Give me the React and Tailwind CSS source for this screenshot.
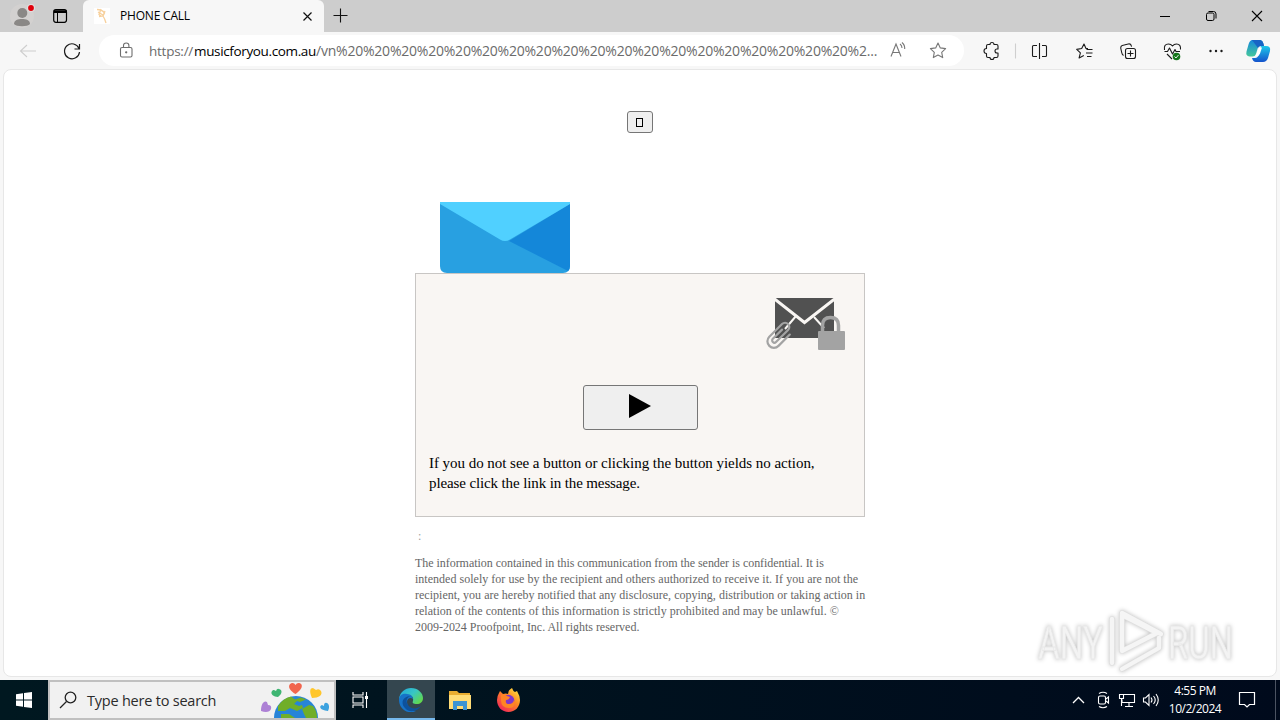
import React from "react";

const url = "/vn" + "%20".repeat(19) + "%2...";

const TitleBar = () => {
  return (
    <div className="flex h-8 bg-[#cdcdcd] text-black">
      <div className="flex items-center w-[83px] rounded-br-md">
        <svg className="w-[83px] h-8" viewBox="0 0 83 32" fill="none">
          <circle cx="22" cy="16" r="12" fill="#d3d1d0" />
          <circle cx="22.3" cy="13" r="5" fill="#8a8886" />
          <path d="M14 24c0-4 4-5 8-5s8 1 8 5c-2 3-14 3-16 0z" fill="#8a8886" />
          <circle cx="31" cy="8" r="4" fill="#e2dedd" />
          <circle cx="31" cy="8" r="2.9" fill="#e0000b" />
          <rect x="53.7" y="9.7" width="12.8" height="12.6" rx="2.2" stroke="#000" strokeWidth="1.2" />
          <path d="M54 11h12.500M54 12.300h12.500" stroke="#000" strokeWidth="1.5" />
          <path d="M57.500 13v9" stroke="#000" strokeWidth="1" />
        </svg>
      </div>
      <div className="flex items-center w-[241px] rounded-t-md bg-[#f7f7f7] pl-[11px]">
        <svg className="w-4 h-4" viewBox="0 0 16 16" fill="none">
          <rect width="16" height="16" fill="#fff" />
          <path d="M3 1.500q5 0 7.500 3.500L9 8l-4 .5M7 1L5 6.500l2.500 2M11 3L9 8q2 3 3 7M4 4l5 3" stroke="#f7d09c" strokeWidth="1.300" />
        </svg>
        <span className="ml-[10px] w-[183px] text-[12px] tracking-[-0.2px] whitespace-nowrap">PHONE CALL</span>
        <svg className="w-[9px] h-[9px]" viewBox="0 0 9 9" stroke="#111" strokeWidth="1.2">
          <path d="M.5.5l8 8M8.500.5l-8 8" />
        </svg>
      </div>
      <svg className="w-[34px] h-8" viewBox="0 0 34 32" stroke="#111" strokeWidth="1.1">
        <path d="M9.500 15.500h14M16.500 8.500v14" />
      </svg>
      <svg className="ml-auto w-[140px] h-8" viewBox="0 0 140 32" fill="none" stroke="#000" strokeWidth="1">
        <path d="M20 16.500h10" />
        <rect x="66.500" y="13" width="7.500" height="7.500" rx="1.500" />
        <path d="M68.500 11.500h5q2.500 0 2.500 2.500v4.500" />
        <path d="M112 11l10 10M122 11l-10 10" strokeWidth="1.1" />
      </svg>
    </div>
  );
};

const Toolbar = () => {
  return (
    <div className="flex items-center h-[37px] bg-[#f7f7f7]">
      <svg className="w-[99px] h-[37px]" viewBox="0 0 99 37" fill="none">
        <path d="M36 19H21M27 13l-6.500 6 6.500 6" stroke="#cecece" strokeWidth="1.1" />
        <path d="M79 16.500a7.500 7.500 0 1 0 .5 3.500M79.500 12v5h-5" stroke="#1b1b1b" strokeWidth="1.2" />
      </svg>
      <div className="flex items-center w-[865px] h-[31px] rounded-full bg-white">
        <svg className="w-[50px] h-[31px]" viewBox="0 0 50 31" fill="none" stroke="#6e6e6e" strokeWidth="1.1">
          <rect x="21.500" y="12.500" width="11.500" height="9.500" rx="1.500" />
          <path d="M24.500 12.500v-2q0-2.500 2.700-2.500t2.700 2.500v2" />
          <circle cx="27.200" cy="17.300" r=".6" fill="#6e6e6e" />
        </svg>
        <div className="flex items-baseline w-[731px] text-[14px] leading-5 text-[#6b6b6b] whitespace-nowrap">
          <span className="w-[45px] text-[13.5px] tracking-[-0.25px]">https://</span>
          <span className="w-[122px] text-[13.5px] text-black tracking-[-0.36px]">musicforyou.com.au</span>
          <span className="tracking-[-0.22px]">{url}</span>
        </div>
        <svg className="w-[84px] h-[31px]" viewBox="0 0 84 31" fill="none" stroke="#777" strokeWidth="1.1">
          <path d="M11 21.500l5-12.500 5 12.500M13 17.500h6M20 9q2 1.500 2 4M22 7.500q3 2.500 2.700 6.500" />
          <path d="M58 8l2.300 4.900 5.300.7-3.900 3.700 1 5.300-4.700-2.600-4.700 2.600 1-5.300-3.900-3.700 5.300-.7z" strokeLinejoin="round" />
        </svg>
      </div>
      <svg className="w-[316px] h-[37px]" viewBox="964 32 316 37" fill="none" stroke="#1b1b1b" strokeWidth="1.1" strokeLinejoin="round">
        <path d="M988 44.500h2a2 2 0 0 1 4 0h2.500q1.500 0 1.500 1.500v3h-1a2 2 0 0 0 0 4h1v3q0 1.500-1.500 1.500h-2.500a2 2 0 0 1-4 0h-2q-1.500 0-1.500-1.500v-2.500a2.500 2.500 0 0 1 0-5V46q0-1.500 1.500-1.500z" />
        <path d="M1015.500 43.500v15" stroke="#cfcfcf" />
        <path d="M1037 45.500h-3.500q-1 0-1 1v9q0 1 1 1h3.500M1042 45.500h3.500q1 0 1 1v9q0 1-1 1H1042M1039.500 43v16" />
        <path d="M1088 48.500h-2l-2-4.500-2.300 4.500-5 .9 3.700 3.500-1.300 5 4.700-2.500M1086.500 49.500h6M1086 53h6.500M1087 56.500h4.500" />
        <rect x="1125.500" y="48.500" width="10" height="10" rx="2" />
        <path d="M1130.500 50.500v6M1127.500 53.500h6M1123.500 55.500q-1.500-1-1.800-3l-1-4.500q0-2 1.500-2.500l6-1.500q2.500-.5 3 1.500l.4 1.200" />
        <path d="M1164.500 50q-1-6 4-6 2.500 0 4 2 1.500-2 4-2 4.500 0 4 5.500M1164.500 51.500h3l2-3.500 3 6 2.500-4.500 1 2h4M1167 54l5 5" />
        <circle cx="1176.500" cy="56.500" r="3.800" fill="#15761b" stroke="none" />
        <path d="M1174.500 56.500l1.500 1.500 2.500-3" stroke="#fff" strokeWidth=".9" />
        <g fill="#1b1b1b" stroke="none">
          <circle cx="1210.500" cy="51" r="1.200" />
          <circle cx="1216" cy="51" r="1.200" />
          <circle cx="1221.500" cy="51" r="1.200" />
        </g>
        <defs>
          <linearGradient id="copilotLeft" x1="0" y1="0" x2="0" y2="1">
            <stop offset="0" stopColor="#1588dc" />
            <stop offset="1" stopColor="#45c79b" />
          </linearGradient>
          <linearGradient id="copilotRight" x1="0" y1="0" x2="0" y2="1">
            <stop offset="0" stopColor="#1ec8ea" />
            <stop offset="1" stopColor="#1453cc" />
          </linearGradient>
        </defs>
        <g stroke="none">
          <path d="M1261 46h5q5 0 4 5l-2 7q-1.500 4-5 4h-7q-3 0-4-4h3q3 0 4-4z" fill="url(#copilotRight)" />
          <path d="M1252 40h8q3 0 4 6h-3q-3 0-3.500 3l-1.500 5q-1 2.500-3.500 2.500h-3q-4-.5-3-5l2-7q1-4 3.500-4.500z" fill="url(#copilotLeft)" />
          <path d="M1252 40h8q3 0 4 6h-3q-2.500 0-3 2z" fill="#1764c5" />
          <path d="M1259.500 47.500h2.500l-2 6q-1 2.500-3 2.500h-1.500z" fill="#fff" />
        </g>
      </svg>
    </div>
  );
};

const Message = () => {
  return (
    <div className="flex flex-col w-[450px] mx-auto pt-[41px] font-['Liberation_Serif',serif]">
      <button className="flex items-center self-center w-[26px] h-[22px] pl-2 rounded-[3px] border border-[#767676] bg-[#efefef]">
        <span className="w-[7px] h-[9px] border border-black"></span>
      </button>
      <svg className="mt-[69px] ml-[25px] w-[130px] h-[71px]" viewBox="0 0 130 71">
        <path d="M0 0h130v64q0 7-7 7H7q-7 0-7-7z" fill="#28a0e1" />
        <path d="M130 2v62q0 3-2 5L69 39z" fill="#1487d9" />
        <path d="M0 0h130v2L70 37.500q-5 3-10 0L0 2z" fill="#50d0ff" />
      </svg>
      <div className="flex flex-col h-[244px] border border-[#c8c6c4] bg-[#f9f6f3] pt-6">
        <svg className="self-end mr-[19px] w-20 h-[53px]" viewBox="0 0 80 53" fill="none">
          <path d="M10 0h59v40H10z" fill="#515151" />
          <path d="M9 .5l30.500 24L69.500 1" stroke="#f9f6f3" strokeWidth="3" />
          <path d="M31 18L20 31M49 19l10 11" stroke="#f9f6f3" strokeWidth="2" />
          <g transform="translate(13.500 38) rotate(45)" stroke="#a3a3a3" strokeWidth="2.200" strokeLinecap="round">
            <path d="M7-9V7A6.500 6.500 0 0 1-6 7V-11A4.200 4.200 0 0 1 2.500-11V6A2 2 0 0 1-2 6V-7" />
          </g>
          <path d="M57.500 34v-6.500q0-8 8-8t8 8V34" stroke="#a3a3a3" strokeWidth="3.500" />
          <rect x="53" y="33" width="27" height="19" rx="1" fill="#a3a3a3" />
        </svg>
        <button className="flex items-center justify-center self-center mt-[34px] w-[115px] h-[45px] rounded-[3px] border border-[#767676] bg-[#efefef]">
          <svg className="w-[22px] h-6 mb-[3px]" viewBox="0 0 22 24">
            <path d="M0 0l22 12L0 24z" fill="#000" />
          </svg>
        </button>
        <p className="mt-[23px] ml-[13px] text-[15px] leading-5 text-black whitespace-nowrap">
          <span className="block tracking-[-0.04px]">If you do not see a button or clicking the button yields no action,</span>
          <span className="block tracking-[-0.12px]">please click the link in the message.</span>
        </p>
      </div>
      <p className="mt-[11px] ml-[3px] text-[12px] leading-4 text-[#a0a0a0]">:</p>
      <p className="mt-[11px] text-[12px] leading-4 text-[#666] whitespace-nowrap">
        <span className="block tracking-[-0.04px]">The information contained in this communication from the sender is confidential. It is</span>
        <span className="block tracking-[0.02px]">intended solely for use by the recipient and others authorized to receive it. If you are not the</span>
        <span className="block tracking-[0.01px]">recipient, you are hereby notified that any disclosure, copying, distribution or taking action in</span>
        <span className="block tracking-[0.02px]">relation of the contents of this information is strictly prohibited and may be unlawful. ©</span>
        <span className="block tracking-[-0.02px]">2009-2024 Proofpoint, Inc. All rights reserved.</span>
      </p>
    </div>
  );
};

const Watermark = () => {
  return (
    <svg className="absolute left-[1006px] top-[522px] w-[255px] h-[84px] overflow-visible drop-shadow-[0_0_2px_rgba(0,0,0,0.25)]" viewBox="1010 592 255 84" fill="none">
      <g fill="#f3f3f3" stroke="#e8e8e8" strokeWidth=".8" fontFamily="Roboto, sans-serif" fontSize="47">
        <text x="1038" y="659" textLength="65" lengthAdjust="spacingAndGlyphs">ANY</text>
        <text x="1168" y="659" textLength="65" lengthAdjust="spacingAndGlyphs">RUN</text>
      </g>
      <g strokeLinejoin="round" strokeLinecap="round">
        <path d="M1112 619v44M1122 615v36l35-18zM1122 669l37-21v-10M1122 613l39 21" stroke="#dedede" strokeWidth="5.500" />
        <path d="M1112 619v44M1122 615v36l35-18zM1122 669l37-21v-10M1122 613l39 21" stroke="#f5f5f5" strokeWidth="4.300" />
      </g>
    </svg>
  );
};

const Taskbar = () => {
  return (
    <div className="flex h-10 bg-gradient-to-r from-[#001820] to-[#000a1c] text-white">
      <div className="flex items-center justify-center w-12">
        <svg className="w-4 h-4" viewBox="0 0 16 16" fill="#fff">
          <path d="M0 2.200l7-1v6.300H0zM8 1l8-1v7.500H8zM0 8.500h7v6.300l-7-1zM8 8.500h8V16l-8-1z" />
        </svg>
      </div>
      <div className="flex items-center w-72 border-2 border-[#c0c0c0] bg-[#f1f1f1] text-[#2b2b2b]">
        <svg className="ml-[9px] w-[18px] h-[18px]" viewBox="0 0 18 18" fill="none" stroke="#222" strokeWidth="1.300">
          <circle cx="11.500" cy="6.500" r="5.300" />
          <path d="M7.500 10.500L1 17" />
        </svg>
        <span className="ml-[10px] mt-[2px] w-[171px] text-[14.500px] leading-5 tracking-[-0.22px] whitespace-nowrap">Type here to search</span>
        <svg className="w-[75px] h-9" viewBox="259 682 75 36">
          <circle cx="297" cy="718" r="22" fill="#2784d8" />
          <path d="M279 706q5-8 13-9.500l4 3 6-2 5 2-6 2.500-3-1-3 3 5 2 3-1 1 3-6 3-7-3-5 3-7 0z" fill="#70ae29" />
          <path d="M303 709l7-4 4 1q4 5 4 12h-11l-2-4zM282 714l8 0 6 4h-14z" fill="#70ae29" />
          <path d="M296.500 694c-10-6-6-11-3-11q2 0 3 2 1-2 3-2c4 0 6 5-3 11z" fill="#f1654e" />
          <path d="M279 697c-9-1-7-7-4-7l2 1q1-3 3-2c4 1 3 5-1 8z" fill="#3eb572" />
          <path d="M313 698c-3-7-2-10 1-10l3 2q3-2 5 1c2 4-2 7-9 7z" fill="#ffc62b" />
          <path d="M262 711c0-7 3-11 6-9l1 3q4 0 3 4c-1 3-5 4-10 2z" fill="#ad81d5" />
          <path d="M329 711c-9-1-9-5-6-6l2 1q0-4 3-3c2 1 3 4 1 8z" fill="#3ca2df" />
        </svg>
      </div>
      <div className="flex items-center w-[51px] pl-4">
        <svg className="w-4 h-4" viewBox="0 0 16 16" fill="none" stroke="#fff" strokeWidth="1.100">
          <path d="M1 0v3h10V0M1 16v-3h10v3M1 5h10v6H1zM14.500 0v16" />
          <path d="M14.500 4v3" strokeWidth="3" />
        </svg>
      </div>
      <div className="flex items-center justify-center w-12 border-b-2 border-[#76b9ed] bg-[#34464f]">
        <svg className="w-6 h-6 mt-[1px]" viewBox="0 0 24 24">
          <defs>
            <linearGradient id="edgeTop" x1="0" y1="0" x2="1" y2=".7">
              <stop offset="0" stopColor="#1fa6df" />
              <stop offset=".55" stopColor="#38c6c4" />
              <stop offset="1" stopColor="#61d84e" />
            </linearGradient>
          </defs>
          <path d="M0 11C1 4 6 0 12 0c7 0 12 5 12 10 0 4-3 6-6 6-4 0-5-1-4-3 1-4-2-6-5-6-4 0-7 2-9 4z" fill="url(#edgeTop)" />
          <path d="M0 12c0-4 3-7 8-6 4 0 6 3 6 5-2-2-6-1-6 3 0 5 5 9 9 9-8 4-17-2-17-11z" fill="#1773c8" />
          <path d="M12 8c-4 1-5 4-4 7 2 6 9 7 14 3-4 6-12 7-16 2-5-5-2-12 6-12z" fill="#0d519c" />
        </svg>
      </div>
      <div className="flex items-center justify-center w-[49px]">
        <svg className="w-[22px] h-[19px]" viewBox="0 0 22 19">
          <path d="M0 0h8l2 2h11v16H0z" fill="#e9ad31" />
          <path d="M0 4h22v14H0z" fill="#ffdc76" />
          <path d="M4 10h14v9h-4v-4H8v4H4z" fill="#3b94d4" />
        </svg>
      </div>
      <div className="flex items-center justify-center w-12">
        <svg className="w-[23px] h-6" viewBox="0 0 23 24">
          <defs>
            <linearGradient id="foxFire" x1="1" y1="0" x2=".2" y2="1">
              <stop offset="0" stopColor="#fff34a" />
              <stop offset=".45" stopColor="#ff8c22" />
              <stop offset="1" stopColor="#f1225c" />
            </linearGradient>
          </defs>
          <path d="M2 5l1-2 3 3q3-1 5 0 0-4 4-6 1 3 3 4l2-1q3 5 3 9c0 7-5 12-11.500 12S0 19 0 12q0-4 2-7z" fill="url(#foxFire)" />
          <circle cx="11.500" cy="12.500" r="5.800" fill="#8036cc" />
          <path d="M4 7q3-1 6 1l3 1q-1 3-4 3-1 4 3 4 4 0 5-4 2 8-5 8-8 0-8-8z" fill="#ff8425" />
        </svg>
      </div>
      <svg className="ml-auto w-[98px] h-10" viewBox="1067 680 98 40" fill="none" stroke="#fff" strokeWidth="1.100">
        <path d="M1073 703l5.500-5.500 5.500 5.500" strokeWidth="1.300" />
        <rect x="1098.500" y="696" width="7" height="8" rx="1.500" />
        <path d="M1106 699l2.500-2v6l-2.500-2M1099 693.500q4-2.500 8 0M1099 706.500q4 2.500 8 0" />
        <path d="M1124 694.500h10.500v8H1122v-3M1119.500 694.500h4v4h-4zM1121.500 699v7M1129 703v3M1125 706.500h8" />
        <path d="M1143.500 698h2l3.500-3.500v11l-3.500-3.500h-2zM1151 697.500q2 2.500 0 5M1153.500 696q3.500 4 0 8M1156 694q4.500 6 0 12" />
      </svg>
      <div className="w-[60px] pt-[2px] text-center text-[12px] leading-[18px] tracking-[-0.5px] whitespace-nowrap">
        <p>4:55 PM</p>
        <p>10/2/2024</p>
      </div>
      <svg className="w-[55px] h-10" viewBox="1225 680 55 40" fill="none" stroke="#fff" strokeWidth="1.200">
        <path d="M1239.500 692.500h15v12h-5l-2.500 2.500-2.500-2.500h-5z" />
        <path d="M1275.500 680v40" stroke="#4b5362" strokeWidth="1" />
      </svg>
    </div>
  );
};

const App = () => {
  return (
    <div className="flex flex-col w-[1280px] h-[720px] overflow-hidden bg-[#f7f7f7] font-['Open_Sans','Noto_Sans',sans-serif]">
      <TitleBar />
      <Toolbar />
      <div className="relative h-[608px] mx-[3px] mb-[3px] rounded-lg border border-[#e7e7e7] bg-white">
        <Message />
        <Watermark />
      </div>
      <Taskbar />
    </div>
  );
};

export default App;
